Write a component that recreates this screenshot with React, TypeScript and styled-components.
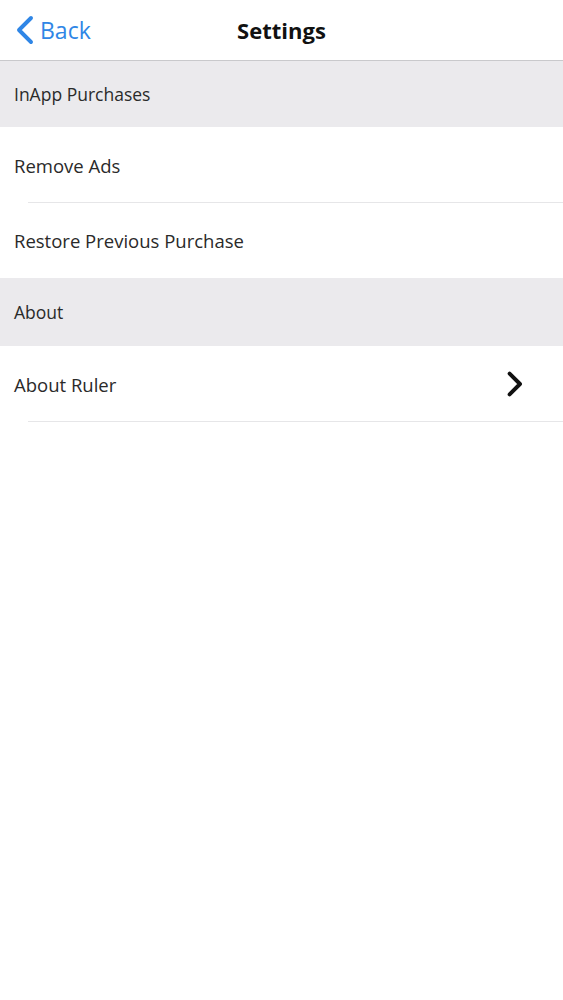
import React from 'react'
import styled, { createGlobalStyle } from 'styled-components'

const Global = createGlobalStyle`
  body {
    margin: 0;
    background: #fff;
    font-family: "Open Sans", "Liberation Sans", sans-serif;
  }
`

const Page = styled.div`
  width: 563px;
  min-height: 1000px;
  background: #fff;
`

const NavBar = styled.div`
  height: 61px;
  display: grid;
  grid-template-columns: 1fr auto 1fr;
  align-items: center;
  border-bottom: 1px solid #c9c9cc;
  box-sizing: border-box;
`

const BackButton = styled.div`
  display: flex;
  align-items: center;
  gap: 6px;
  padding-left: 16px;
  color: #2f86e6;
  font-size: 23px;
  margin-top: -1px;
`

const Title = styled.h1`
  margin: 0;
  font-size: 22px;
  font-weight: 700;
  color: #111;
`

const SectionHeader = styled.div<{ $h: number }>`
  height: ${p => p.$h}px;
  display: flex;
  align-items: center;
  padding-left: 14px;
  background: #ebeaed;
  font-size: 17.5px;
  color: #2a2a2a;
`

const Row = styled.div<{ $divider?: boolean }>`
  position: relative;
  height: ${p => (p.$divider ? 76 : 75)}px;
  display: flex;
  align-items: center;
  justify-content: space-between;
  padding: 0 40px 0 14px;
  font-size: 18.5px;
  color: #2a2a2a;
  box-sizing: border-box;
  ${p => p.$divider && `
    &::after {
      content: '';
      position: absolute;
      left: 28px;
      right: 0;
      bottom: 0;
      height: 1px;
      background: #e6e6e8;
    }
  `}
`

const Chevron = ({ dir, color, size }: { dir: 'left' | 'right'; color: string; size: number }) => (
  <svg width={size * 0.6} height={size} viewBox="0 0 12 20" fill="none">
    <path
      d={dir === 'left' ? 'M10 2 L2 10 L10 18' : 'M2 2 L10 10 L2 18'}
      stroke={color}
      strokeWidth={dir === 'left' ? 2.6 : 3}
      strokeLinecap="round"
      strokeLinejoin="round"
    />
  </svg>
)

const App = () => {
  return (
    <Page>
      <Global />
      <NavBar>
        <BackButton>
          <Chevron dir="left" color="#2f86e6" size={30} />
          <span>Back</span>
        </BackButton>
        <Title>Settings</Title>
        <div />
      </NavBar>
      <SectionHeader $h={66}>InApp Purchases</SectionHeader>
      <Row $divider>Remove Ads</Row>
      <Row>Restore Previous Purchase</Row>
      <SectionHeader $h={68}>About</SectionHeader>
      <Row $divider>
        <span>About Ruler</span>
        <Chevron dir="right" color="#111" size={26} />
      </Row>
    </Page>
  )
}

export default App
